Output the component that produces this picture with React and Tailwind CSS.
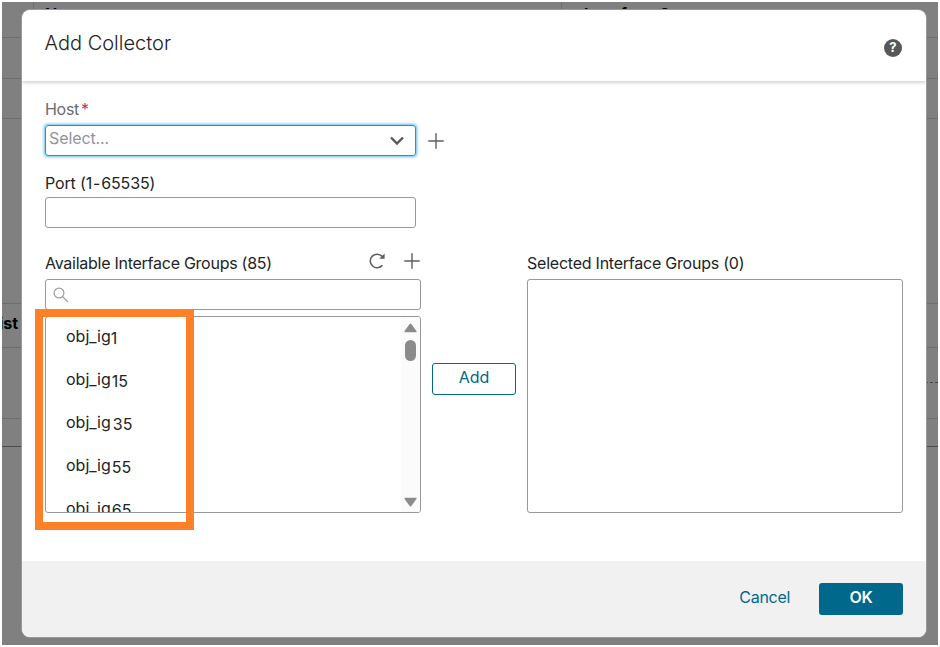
import React from 'react';

const Plus = () => (
  <svg className="block h-4 w-4" viewBox="0 0 16 16" fill="none" stroke="#5c5d60" strokeWidth="1.4">
    <path d="M8 .3v15.4M.3 8h15.4" />
  </svg>
);

const Refresh = () => (
  <svg className="block h-4 w-4" viewBox="0 0 16 16" fill="none" stroke="#5c5d60" strokeWidth="1.5">
    <path d="M13.4 12.2A6.8 6.8 0 1 1 13.2 3.5" />
    <path d="M15.6 .6v5.2h-5.4z" fill="#5c5d60" stroke="none" />
  </svg>
);

const groups = [
  { id: '1', gap: 'ml-0' },
  { id: '15', gap: 'ml-px' },
  { id: '35', gap: 'ml-0.5' },
  { id: '55', gap: 'ml-px' },
  { id: '65', gap: 'ml-px' },
];

const PageBehind = () => (
  <div className="flex h-[643px] w-[936px] flex-col overflow-hidden bg-[#808080] text-base font-bold text-black">
    <div className="flex h-9 border-b border-[#6d6d6d]">
      <div className="ml-[31px] w-[528px] border-l border-[#6d6d6d] pl-[11px] leading-[25px]">Name</div>
      <div className="border-l border-[#6d6d6d] pl-[22px] leading-[25px]">Interface Groups</div>
    </div>
    <div className="h-[41px] border-b border-[#6d6d6d]" />
    <div className="h-10 border-b border-[#6d6d6d]" />
    <div className="h-[185px] border-b border-[#6d6d6d]" />
    <div className="h-11 border-b border-[#6d6d6d] leading-[39px]">
      <span className="-ml-[3px]">ist</span>
    </div>
    <div className="ml-[559px] h-[35px] border-b border-dashed border-[#484848]" />
    <div className="h-9 border-b border-[#6d6d6d]" />
    <div className="h-7 border-b border-[#4c4c4c]" />
  </div>
);

const Header = () => (
  <div className="relative flex h-[71px] justify-between rounded-t-lg bg-white pl-[22.5px] pr-6 shadow-[0_1px_4px_rgba(0,0,0,0.25)]">
    <h1 className="mt-[17px] text-xl font-[350] leading-8 tracking-[0.02px]">Add Collector</h1>
    <div className="mt-[29px] flex h-[18px] w-[18px] items-center justify-center rounded-full bg-[#58585b] text-[13px] font-bold text-white">?</div>
  </div>
);

const AvailableGroups = () => (
  <div className="w-[376px]">
    <div className="flex h-[26px] items-start justify-between pr-px">
      <span className="leading-5 tracking-[-0.26px]">Available Interface Groups (85)</span>
      <div className="flex gap-[19px]">
        <Refresh />
        <Plus />
      </div>
    </div>
    <div className="flex h-[31px] items-center rounded-[3px] border border-[#98989b] pl-[7px]">
      <svg className="h-4 w-4" viewBox="0 0 16 16" fill="none" stroke="#a0a0a0" strokeWidth="1.2">
        <circle cx="6" cy="6" r="4.9" />
        <path d="M9.5 9.5l5.5 5.5" />
      </svg>
    </div>
    <div className="relative mt-1.5">
      <div className="flex h-[197px] justify-between overflow-hidden rounded-[3px] border border-[#98989b]">
        <ul className="pl-5 pt-[9px]">
          {groups.map((g) => (
            <li key={g.id} className="flex h-[43px] leading-5">
              <span>obj_ig</span>
              <span className={`relative top-0.5 ${g.gap}`}>{g.id}</span>
            </li>
          ))}
        </ul>
        <div className="flex w-[19px] flex-col items-center bg-[#fbfbfb]">
          <svg className="mt-1.5 block h-2.5 w-3.5 shrink-0" viewBox="0 0 14 10">
            <path d="M6.5 1.3L11.8 8.5H1.2z" fill="#8b8b8b" stroke="#8b8b8b" strokeWidth="1.6" strokeLinejoin="round" />
          </svg>
          <div className="mt-[7px] h-[21px] w-[11px] shrink-0 rounded-full bg-[#8b8b8b]" />
          <svg className="mb-[5px] mt-auto block h-2.5 w-3.5 shrink-0" viewBox="0 0 14 10">
            <path d="M6.5 8.7L11.8 1.5H1.2z" fill="#8b8b8b" stroke="#8b8b8b" strokeWidth="1.6" strokeLinejoin="round" />
          </svg>
        </div>
      </div>
      {/* highlight frame around the group names */}
      <div className="absolute -left-[10px] -top-[7px] h-[221px] w-[159px] border-8 border-[#ff8027]" />
    </div>
  </div>
);

export default function App() {
  return (
    <div className="h-[647px] w-[940px] overflow-hidden bg-white p-0.5 font-['Inter',sans-serif] text-base text-[#222326]">
      <PageBehind />
      <div className="absolute left-[22px] top-[10px] flex h-[627px] w-[904px] flex-col overflow-hidden rounded-lg bg-white shadow-[0_0_0_1px_#999]">
        <Header />
        <div className="h-[480px] px-[23px] pt-[18px]">
          <div className="leading-5 tracking-[-0.3px] text-[#6a6b6f]">
            Host<span className="ml-0.5 text-[#d1334a]">*</span>
          </div>
          <div className="mt-1.5 flex items-center gap-3">
            <div className="flex h-[31px] w-[371px] items-center justify-between rounded-[3px] border border-[#0d9cd8] pl-[3px] pr-[11px] text-[#8f949c] shadow-[0_0_3px_1px_#64bbe3]">
              <span className="-mt-[5px] tracking-[-0.1px]">Select...</span>
              <svg className="-mt-0.5 h-3.5 w-3.5" viewBox="0 0 14 14" fill="none" stroke="#58585b" strokeWidth="2.4">
                <path d="M1 4.5l6 6 6-6" />
              </svg>
            </div>
            <Plus />
          </div>
          <div className="mt-[17px] leading-5 tracking-[-0.15px]">
            Port (1<span className="mx-px">-</span>65535)
          </div>
          <div className="mt-1 h-[31px] w-[371px] rounded-[3px] border border-[#98989b]" />
          <div className="mt-[25px] flex">
            <AvailableGroups />
            <button className="ml-[11px] mt-[110px] h-8 w-[84px] rounded-[3px] border border-[#00688b] pb-[5px] text-[#00688b]">Add</button>
            <div className="ml-[11px] w-[376px]">
              <div className="h-[26px] leading-5 tracking-[-0.23px]">Selected Interface Groups (0)</div>
              <div className="h-[234px] rounded-[3px] border border-[#98989b]" />
            </div>
          </div>
        </div>
        <div className="flex flex-1 items-start justify-end gap-[29px] bg-[#f1f1f1] pr-[23px] pt-[22px]">
          <button className="h-8 pb-[5px] tracking-[-0.3px] text-[#00688b]">Cancel</button>
          <button className="h-8 w-[84px] rounded-[3px] bg-[#00688b] pb-[5px] font-semibold tracking-[-0.2px] text-white">OK</button>
        </div>
      </div>
    </div>
  );
}
